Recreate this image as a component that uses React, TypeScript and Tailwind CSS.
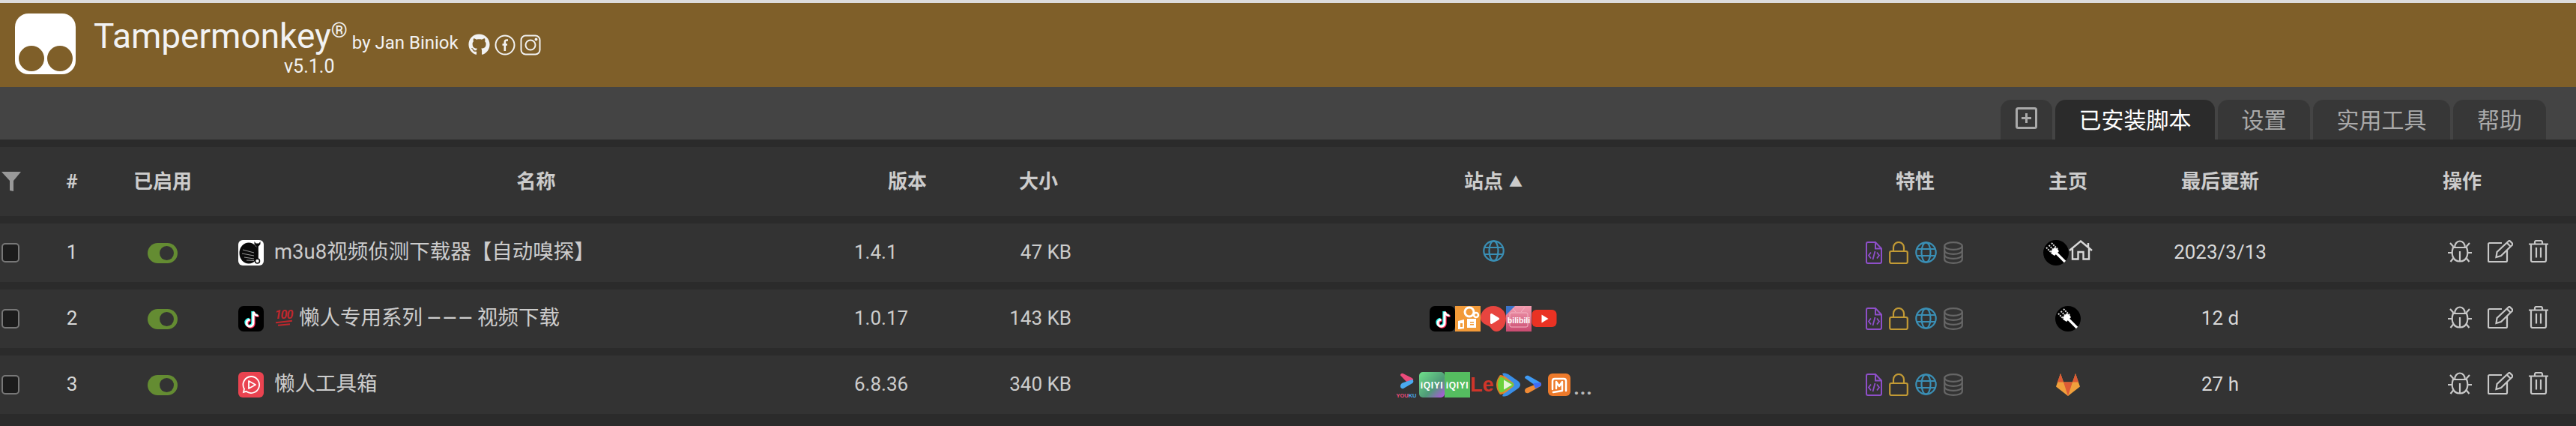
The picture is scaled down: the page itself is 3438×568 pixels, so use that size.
import { FaGithub } from "react-icons/fa";

const gridCols =
  "grid grid-cols-[42px_108px_134px_856px_142px_214px_994px_132px_276px_130px_1fr] items-center";

function Logo() {
  return (
    <svg width="81" height="81" viewBox="0 0 81 81">
      <rect width="81" height="81" rx="18" fill="#fff" />
      <circle cx="22" cy="60" r="17" fill="#7f5f29" />
      <circle cx="60" cy="60" r="17" fill="#7f5f29" />
    </svg>
  );
}

function Facebook() {
  return (
    <svg width="28" height="28" viewBox="0 0 28 28" fill="none" stroke="#f2f2f2">
      <circle cx="14" cy="14" r="12.5" strokeWidth="2" />
      <path d="M18 7.500h-1.500c-1.800 0-2.700 1-2.700 2.800V22M10.500 13.500h6.500" strokeWidth="2.600" />
    </svg>
  );
}

function Instagram() {
  return (
    <svg width="28" height="28" viewBox="0 0 28 28" fill="none" stroke="#f2f2f2" strokeWidth="2">
      <rect x="1.500" y="1.500" width="25" height="25" rx="6" />
      <circle cx="14" cy="14" r="6.500" />
      <circle cx="21.500" cy="6.500" r="1" fill="#f2f2f2" />
    </svg>
  );
}

function Check() {
  return <div className="ml-[2px] h-[26px] w-[24px] rounded-[5px] border-2 border-[#777] bg-[#1c1c1c]" />;
}

function Toggle() {
  return (
    <div className="mx-auto flex h-[27px] w-[40px] items-center justify-end rounded-full bg-[#648c32] pr-[5px]">
      <div className="h-[19px] w-[19px] rounded-full bg-[#333]" />
    </div>
  );
}

function FileCode() {
  return (
    <svg width="22" height="30" viewBox="0 0 22 30" fill="none" stroke="#8e4fc9" strokeWidth="2">
      <path d="M3 1h10l8 8.500V27a2 2 0 0 1-2 2H3a2 2 0 0 1-2-2V3a2 2 0 0 1 2-2z" />
      <path d="M13 1v8.500h8" />
      <path d="M7 14.500l-3 4 3 4M15 14.500l3 4-3 4M12.500 13l-3 11" strokeWidth="1.800" />
    </svg>
  );
}

function Lock() {
  return (
    <svg width="26" height="30" viewBox="0 0 26 30" fill="none" stroke="#c29a35" strokeWidth="2.200">
      <rect x="1.200" y="13" width="23.600" height="16" rx="2" />
      <path d="M6 13V8a7 7 0 0 1 14 0v5" />
    </svg>
  );
}

function Globe({ color = "#3a8fb5" }: { color?: string }) {
  return (
    <svg width="29" height="29" viewBox="0 0 29 29" fill="none" stroke={color} strokeWidth="2.200">
      <circle cx="14.500" cy="14.500" r="13.200" />
      <ellipse cx="14.500" cy="14.500" rx="6" ry="13.200" />
      <path d="M2.500 10h24M2.500 19h24" />
    </svg>
  );
}

function Database() {
  return (
    <svg width="26" height="30" viewBox="0 0 26 30" fill="none" stroke="#666" strokeWidth="2.200">
      <ellipse cx="13" cy="6" rx="11.800" ry="4.800" />
      <path d="M1.200 6v18c0 2.700 5.300 4.800 11.800 4.800S24.800 26.700 24.800 24V6" />
      <path d="M1.200 12c0 2.700 5.300 4.800 11.800 4.800S24.800 14.700 24.800 12M1.200 18c0 2.700 5.300 4.800 11.800 4.800S24.800 20.700 24.800 18" />
    </svg>
  );
}

function Fork() {
  return (
    <svg width="34" height="34" viewBox="0 0 34 34">
      <circle cx="17" cy="17" r="17" fill="#000" />
      <path d="M16 16l13 13" stroke="#fff" strokeWidth="3.400" />
      <path d="M4 10l9 9M7.500 7l9 9M11 4l9 9" stroke="#ddd" strokeWidth="2" strokeDasharray="2 1.200" />
      <path d="M10 15l2 4 3 2 6-6-2-3-4-2z" fill="#fff" />
    </svg>
  );
}

function Home() {
  return (
    <svg width="32" height="27" viewBox="0 0 32 27" fill="none" stroke="#d8d8d8" strokeWidth="2.400">
      <path d="M1 14L16 1.500l15 12.500M26 9.500V4M5 11v14.500h7.500V16h7v9.500H27V11" />
    </svg>
  );
}

function GitLab() {
  return (
    <svg width="32" height="30" viewBox="0 0 32 30">
      <path d="M16 30L0 17.500 6 0l4 11.500h12L26 0l6 17.500z" fill="#f0a03c" />
      <path d="M16 30L10 11.500h12z" fill="#dc5a35" />
      <path d="M6 0L2 11.500h8zM26 0l-4 11.500h8z" fill="#dc5a35" />
    </svg>
  );
}

function Bug() {
  return (
    <svg width="32" height="30" viewBox="0 0 32 30" fill="none" stroke="#c8c8c8" strokeWidth="2.200">
      <path d="M9 10a7 8.500 0 0 1 14 0" />
      <path d="M7 10h18c1.500 4 1.500 9 .5 12-1.500 4-5 6.500-9.500 6.500S8 26 6.500 22c-1-3-1-8 .5-12z" />
      <path d="M16 15v13M0 17h6M26 17h6M3 4l4.500 5M29 4l-4.500 5M3.500 29l4-5M28.500 29l-4-5" />
    </svg>
  );
}

function Edit() {
  return (
    <svg width="34" height="30" viewBox="0 0 34 30" fill="none" stroke="#c8c8c8" strokeWidth="2.200">
      <path d="M19 4H2.500A1.500 1.500 0 0 0 1 5.500v22A1.500 1.500 0 0 0 2.500 29h22a1.500 1.500 0 0 0 1.500-1.500V14" />
      <path d="M30 1.500l3 3a1.500 1.500 0 0 1 0 2L18 21l-6.500 2 1-7L28 1.500a1.500 1.500 0 0 1 2 0zM26 4l5 5" />
    </svg>
  );
}

function Trash() {
  return (
    <svg width="26" height="30" viewBox="0 0 26 30" fill="none" stroke="#c8c8c8" strokeWidth="2.200">
      <path d="M0 5.500h26M3 6v21a2 2 0 0 0 2 2h16a2 2 0 0 0 2-2V6M8 5V3a2 2 0 0 1 2-2h6a2 2 0 0 1 2 2v2M10 10v13.500M16 10v13.500" />
    </svg>
  );
}

function Note() {
  return (
    <svg width="34" height="34" viewBox="0 0 34 34">
      <rect width="34" height="34" rx="7" fill="#000" />
      <path d="M19 7v15a4.500 4.500 0 1 1-4.500-4.500" fill="none" stroke="#25f4ee" strokeWidth="3.400" />
      <path d="M19.500 7c.5 3 3 5 6 5" fill="none" stroke="#25f4ee" strokeWidth="3" />
      <path d="M21 8.500v15a4.500 4.500 0 1 1-4.500-4.500" fill="none" stroke="#fe2c55" strokeWidth="3.400" />
      <path d="M21.500 8.500c.5 3 3 5 6 5" fill="none" stroke="#fe2c55" strokeWidth="3" />
      <path d="M20 7.800v15a4.500 4.500 0 1 1-4.500-4.500" fill="none" stroke="#fff" strokeWidth="3" />
      <path d="M20.500 7.800c.5 3 3 5 6 5" fill="none" stroke="#fff" strokeWidth="2.600" />
    </svg>
  );
}

function Kuaishou() {
  return (
    <svg width="34" height="34" viewBox="0 0 34 34">
      <rect width="34" height="34" fill="#f29a38" />
      <circle cx="19" cy="8" r="6" fill="none" stroke="#fff" strokeWidth="3" />
      <circle cx="28" cy="12" r="3" fill="none" stroke="#fff" strokeWidth="2.500" />
      <path d="M4 20l8-2v12l-8 1zM16 17h12v12H16z" fill="#fff" />
      <path d="M7 23h3v5H7zM20 21h5v1.500h-5zM20 24h5v1.500h-5z" fill="#f29a38" />
    </svg>
  );
}

function RedPlay() {
  return (
    <svg width="34" height="34" viewBox="0 0 34 34">
      <path d="M17 0c9.400 0 17 7 17 16.500 0 10-6.500 17.500-13 17.500-5 0-6-4-9-6.500C9 25 0 23.500 0 16 0 7 7.600 0 17 0z" fill="#e8453f" />
      <path d="M13 11.500a1.500 1.500 0 0 1 2.300-1.300l9 5.500a1.500 1.500 0 0 1 0 2.600l-9 5.500A1.500 1.500 0 0 1 13 22.500z" fill="#fff" />
    </svg>
  );
}

function Bilibili() {
  return (
    <svg width="34" height="34" viewBox="0 0 34 34">
      <defs>
        <linearGradient id="bili" x1="0" y1="0" x2="0" y2="1">
          <stop offset="0" stopColor="#f29db0" />
          <stop offset="1" stopColor="#c94a70" />
        </linearGradient>
      </defs>
      <rect width="34" height="34" fill="url(#bili)" />
      <path d="M0 0h12L0 12z" fill="#3b74c9" />
      <rect x="5" y="9" width="24" height="19" rx="2" fill="none" stroke="#f5b4c4" strokeWidth="1" />
      <path d="M13 8L9 3M20 8l5-6" stroke="#f5b4c4" strokeWidth="1" />
      <text x="17" y="23" textAnchor="middle" fontFamily="Liberation Sans, sans-serif" fontSize="10.500" fontWeight="700" fill="#fff">
        bilibili
      </text>
    </svg>
  );
}

function YouTube() {
  return (
    <svg width="34" height="34" viewBox="0 0 34 34">
      <rect x="0.500" y="5" width="33" height="23" rx="6" fill="#ea3223" />
      <path d="M13.500 11.500l9 5.500-9 5.500z" fill="#fff" />
    </svg>
  );
}

function Youku() {
  return (
    <svg width="34" height="34" viewBox="0 0 34 34">
      <path d="M9 4.500a2.500 2.500 0 0 1 3.500-2.500l12 6a3 3 0 0 1 .5 5L18 14z" fill="#ec4b7b" />
      <path d="M25 10a3 3 0 0 1 0 5l-12 7a3 3 0 0 1-4-3c0-2 1-3.500 3-4.500z" fill="#4aaaf0" />
      <text x="17" y="33.500" textAnchor="middle" fontFamily="Liberation Sans, sans-serif" fontSize="7.500" fontWeight="700" fill="#ec4b7b">
        YOU<tspan fill="#4aaaf0">KU</tspan>
      </text>
    </svg>
  );
}

function Iqiyi({ gradient }: { gradient?: boolean }) {
  return (
    <svg width="34" height="34" viewBox="0 0 34 34">
      <defs>
        <linearGradient id="iq" x1="0" y1="0" x2="1" y2="1">
          <stop offset="0" stopColor="#6fe08a" />
          <stop offset="0.600" stopColor="#4f9a78" />
          <stop offset="1" stopColor="#b84fe8" />
        </linearGradient>
      </defs>
      <rect width="34" height="34" rx={gradient ? 5 : 0} fill={gradient ? "url(#iq)" : "#55bd60"} />
      <text x="17" y="21.500" textAnchor="middle" fontFamily="Liberation Sans, sans-serif" fontSize="12" fontWeight="700" letterSpacing="0.600" fill="#fff">
        iQIYI
      </text>
    </svg>
  );
}

function LeLogo() {
  return (
    <svg width="34" height="34" viewBox="0 0 34 34">
      <text x="0" y="26" fontFamily="Liberation Sans, sans-serif" fontSize="27" fontWeight="700" fill="#d0352a">
        Le
      </text>
    </svg>
  );
}

function Tencent() {
  return (
    <svg width="34" height="34" viewBox="0 0 34 34">
      <path d="M9 2c2-1 5-.5 8 1l13 9c2 1.500 3 3.500 3 5s-1 3.500-3 5l-13 9c-3 1.500-6 2-8 1 3-5 4-10 4-15s-1-10-4-15z" fill="#3a8fe8" />
      <path d="M6 4c3 0 5 1 8 3l9 7c2 1.500 2 4.500 0 6l-9 7c-3 2-5 3-8 3-3-4-5-8-5-13S3 8 6 4z" fill="#f08a24" opacity="0.900" />
      <path d="M6 7h3l14 8c1.500 1 1.500 3 0 4L9 27H6c-2-3-3-6-3-10s1-7 3-10z" fill="#6bd23c" />
      <path d="M11 10.500l11 6.500-11 6.500z" fill="#e8f5d8" />
    </svg>
  );
}

function Youku2() {
  return (
    <svg width="34" height="34" viewBox="0 0 34 34">
      <path d="M5 8c0-2.500 2.500-4 5-3l15 8.500c2 1 2 3 1 5l-9-2z" fill="#3f9bf5" />
      <path d="M26 14c2 2 1 4.500-1 5.500L10 28c-2.500 1-5-.5-5-3 0-2 1-3 3-4z" fill="#f08a34" />
      <path d="M16 15l10-1c1.500 1.500 1.500 3.500 0 5l-7 3z" fill="#3f6cf5" />
    </svg>
  );
}

function Mgtv() {
  return (
    <svg width="34" height="34" viewBox="0 0 34 34">
      <rect x="2" y="2" width="30" height="30" rx="6" fill="#ed7a2b" />
      <path d="M8 23V12c0-2 1-3 3-3h12c2 0 3 1 3 3v13" fill="none" stroke="#fff" strokeWidth="2.500" strokeLinecap="round" />
      <path d="M13 22V13l4 6 4-6v12l-12 2" fill="none" stroke="#fff" strokeWidth="2.500" strokeLinecap="round" strokeLinejoin="round" />
    </svg>
  );
}

function WrenchLogo() {
  return (
    <svg width="34" height="34" viewBox="0 0 34 34">
      <rect width="34" height="34" rx="6" fill="#fff" />
      <ellipse cx="14" cy="17.500" rx="12.500" ry="14" fill="#0a0a0a" />
      <path d="M6 13l15 4M5 18l16 3M8 23l13 2M11 27l10 .5" stroke="#bbb" strokeWidth="0.800" />
      <path d="M25.500 8v18" stroke="#0a0a0a" strokeWidth="2.600" />
      <path d="M21.500 2v3.500l2.500 3h3l2.500-3V2l-2 2.500h-4z" fill="#0a0a0a" />
      <circle cx="25.500" cy="28" r="3" fill="none" stroke="#0a0a0a" strokeWidth="1.500" />
    </svg>
  );
}

function ToolboxLogo() {
  return (
    <svg width="34" height="34" viewBox="0 0 34 34">
      <rect width="34" height="34" rx="6" fill="#ea4350" />
      <path d="M17 6a11 11 0 1 1-6.500 19.800L7 27l1-4.500A11 11 0 0 1 17 6z" fill="none" stroke="#fff" strokeWidth="1.800" />
      <path d="M14 12l9 5-9 5z" fill="none" stroke="#fff" strokeWidth="1.800" strokeLinejoin="round" />
    </svg>
  );
}

function Hundred() {
  return (
    <span className="mr-[8px] flex h-[26px] w-[25px] flex-col items-center text-[#c0272d]">
      <span className="text-[16px] leading-[17px] font-bold italic -tracking-[1px]">100</span>
      <span className="h-[2px] w-[22px] -rotate-6 bg-[#c0272d]" />
      <span className="mt-[2px] h-[2px] w-[16px] -rotate-6 bg-[#c0272d]" />
    </span>
  );
}

function Features() {
  return (
    <div className="flex items-start gap-[9px]">
      <FileCode />
      <Lock />
      <Globe />
      <Database />
    </div>
  );
}

type Row = {
  num: number;
  logo: React.ReactNode;
  name: React.ReactNode;
  version: string;
  size: string;
  sites: React.ReactNode;
  home: React.ReactNode;
  updated: string;
};

const rows: Row[] = [
  {
    num: 1,
    logo: <WrenchLogo />,
    name: "m3u8视频侦测下载器【自动嗅探】",
    version: "1.4.1",
    size: "47 KB",
    sites: <Globe />,
    home: (
      <>
        <Fork />
        <Home />
      </>
    ),
    updated: "2023/3/13",
  },
  {
    num: 2,
    logo: <Note />,
    name: (
      <>
        <Hundred />
        懒人专用系列
        <span className="mx-[5px] text-[32px] leading-none">–––</span>
        视频下载
      </>
    ),
    version: "1.0.17",
    size: "143 KB",
    sites: (
      <>
        <Note />
        <Kuaishou />
        <RedPlay />
        <Bilibili />
        <YouTube />
      </>
    ),
    home: <Fork />,
    updated: "12 d",
  },
  {
    num: 3,
    logo: <ToolboxLogo />,
    name: "懒人工具箱",
    version: "6.8.36",
    size: "340 KB",
    sites: (
      <>
        <Youku />
        <Iqiyi gradient />
        <Iqiyi />
        <LeLogo />
        <Tencent />
        <Youku2 />
        <Mgtv />
        <span className="self-end pl-[2px] text-[26px] leading-[26px] font-bold tracking-[1px] text-[#bbb]">...</span>
      </>
    ),
    home: <GitLab />,
    updated: "27 h",
  },
];

export default function App() {
  return (
    <div
      className="h-[568px] w-full overflow-hidden bg-[#2b2b2b] text-[26px] text-[#ccc]"
      style={{ fontFamily: 'Roboto, "Noto Sans CJK SC", sans-serif' }}
    >
      <div className="h-[4px] bg-[#dcdcdc]" />
      <header className="flex h-[112px] items-start gap-[24px] bg-[#7f5f29] pt-[14px] pl-[20px] text-[#f2f2f2]">
        <Logo />
        <div className="flex flex-col">
          <div className="flex items-end">
            <span className="pt-[2px] text-[46px] leading-[56px]">
              Tampermonkey
              <sup className="text-[28px] leading-none">®</sup>
            </span>
            <span className="ml-[6px] text-[24px] leading-[38px]">by Jan Biniok</span>
            <span className="mb-[2px] ml-[13px] flex items-center gap-[6px]">
              <FaGithub size={29} />
              <Facebook />
              <Instagram />
            </span>
          </div>
          <div className="pl-[254px] text-[25px] leading-[26px]">v5.1.0</div>
        </div>
      </header>

      <nav className="flex h-[70px] items-end justify-end gap-[4px] bg-[#444] pr-[40px] text-[30px] text-[#aaa]">
        <div className="flex h-[53px] w-[69px] justify-center rounded-t-[14px] bg-[#373737] pt-[10px]">
          <svg width="29" height="29" viewBox="0 0 29 29" fill="none" stroke="#aaa" strokeWidth="3">
            <rect x="1.500" y="1.500" width="26" height="26" rx="2" />
            <path d="M14.500 8v13M8 14.500h13" />
          </svg>
        </div>
        <div className="flex h-[53px] w-[213px] justify-center rounded-t-[14px] bg-[#2b2b2b] leading-[56px] text-white">已安装脚本</div>
        <div className="flex h-[53px] w-[123px] justify-center rounded-t-[14px] bg-[#373737] leading-[56px]">设置</div>
        <div className="flex h-[53px] w-[183px] justify-center rounded-t-[14px] bg-[#373737] leading-[56px]">实用工具</div>
        <div className="flex h-[53px] w-[124px] justify-center rounded-t-[14px] bg-[#373737] leading-[56px]">帮助</div>
      </nav>

      <div className="flex flex-col gap-[10px] pt-[10px]">
        <div className={`${gridCols} h-[92px] bg-[#333] text-center font-bold`}>
          <svg width="28" height="26" viewBox="0 0 28 26" className="ml-[1px]">
            <path d="M1 0h26L17 12v14l-5-1V12z" fill="#999" />
          </svg>
          <div>#</div>
          <div>已启用</div>
          <div className="pl-[7px]">名称</div>
          <div>版本</div>
          <div className="pr-[84px] text-right">大小</div>
          <div className="flex items-center justify-center gap-[8px]">
            站点 <span className="text-[18px]">▲</span>
          </div>
          <div>特性</div>
          <div>主页</div>
          <div>最后更新</div>
          <div className="pl-[232px] text-left">操作</div>
        </div>

        {rows.map((row) => (
          <div key={row.num} className={`${gridCols} h-[78px] bg-[#333]`}>
            <Check />
            <div className="pb-[2px] text-center text-[#d8d8d8]">{row.num}</div>
            <Toggle />
            <div className="flex items-center pl-[34px]">
              <span className="mr-[14px] shrink-0">{row.logo}</span>
              <span className="flex items-center pb-[2px] text-[27.500px]">{row.name}</span>
            </div>
            <div className="pb-[2px]">{row.version}</div>
            <div className="pr-[66px] pb-[2px] text-right">{row.size}</div>
            <div className="flex h-[34px] items-start justify-center">{row.sites}</div>
            <Features />
            <div className="flex items-start justify-center">{row.home}</div>
            <div className="pb-[2px] text-center text-[#d8d8d8]">{row.updated}</div>
            <div className="flex items-center pb-[4px] pl-[239px]">
              <Bug />
              <span className="ml-[21px]">
                <Edit />
              </span>
              <span className="ml-[21px]">
                <Trash />
              </span>
            </div>
          </div>
        ))}
      </div>
    </div>
  );
}
